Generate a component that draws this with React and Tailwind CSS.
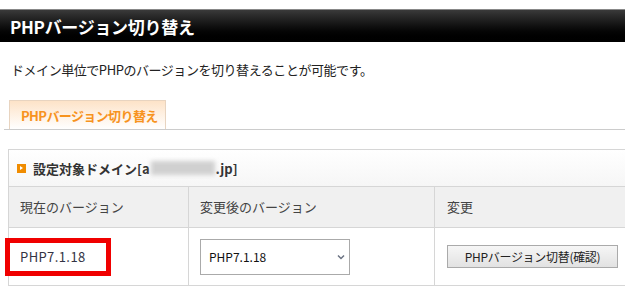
import React from "react";

const jp = { fontFamily: '"Noto Sans CJK JP", "Liberation Sans", sans-serif' };

function Chevron() {
  return (
    <svg width="8" height="6" viewBox="0 0 8 6" className="text-gray-500">
      <path d="M1 1.5 L4 4.5 L7 1.5" fill="none" stroke="currentColor" strokeWidth="1.5" />
    </svg>
  );
}

export default function App() {
  return (
    <div className="w-[625px] h-[297px] overflow-hidden bg-white text-[#333]" style={jp}>
      {/* ===== TITLE BAR ===== */}
      <div className="mt-[9px] h-[33px] border-t border-[#888] bg-gradient-to-b from-[#3a3a3a] via-[#111] to-[#000] flex items-center pl-[10px]">
        <h1 className="text-white font-bold text-[17px] leading-none tracking-[-0.3px]">
          PHPバージョン切り替え
        </h1>
      </div>

      {/* ===== DESCRIPTION ===== */}
      <p className="mt-[19px] pl-[11px] text-[13px] leading-[18px] tracking-[-0.45px] text-[#222]">
        ドメイン単位でPHPのバージョンを切り替えることが可能です。
      </p>

      {/* ===== TAB ===== */}
      <div className="mt-[21px] ml-[4px] border-b border-[#ccc] flex">
        <div className="ml-[5px] -mb-px w-[157px] h-[29px] border border-b-0 border-[#e8d4c0] bg-gradient-to-b from-[#fde3c8] to-white flex items-center pl-[11px]">
          <span className="text-[#f7931e] font-bold text-[13px] leading-none tracking-[-0.6px]">
            PHPバージョン切り替え
          </span>
        </div>
        <div className="h-[29px]" />
      </div>

      {/* ===== SECTION ===== */}
      <div className="mt-[19px] ml-[8px] border border-r-0 border-[#d6d6d6]">
        <div className="h-[36px] bg-gradient-to-b from-white to-[#f6f6f6] flex items-center pl-[8px] gap-[7px]">
          <span className="w-[9px] h-[9px] bg-[#f08c00] flex items-center justify-center">
            <span className="w-0 h-0 border-y-[2.5px] border-y-transparent border-l-[3px] border-l-white" />
          </span>
          <span className="font-bold text-[13px] leading-none text-[#333] flex items-center">
            設定対象ドメイン[a
            <span className="inline-block w-[64px] h-[14px] mx-[1px] bg-[#d0d0d0] blur-[2px]" />
            .jp]
          </span>
        </div>

        <div className="grid grid-cols-[180px_246px_1fr] border-t border-[#d6d6d6]">
          <div className="h-[40px] bg-[#f0f0f0] flex items-center pl-[11px] text-[13px] text-[#444] border-r border-[#d6d6d6]">
            現在のバージョン
          </div>
          <div className="h-[40px] bg-[#f0f0f0] flex items-center pl-[11px] text-[13px] text-[#444] border-r border-[#d6d6d6]">
            変更後のバージョン
          </div>
          <div className="h-[40px] bg-[#f0f0f0] flex items-center pl-[12px] text-[13px] text-[#444]">
            変更
          </div>

          <div className="h-[58px] border-t border-r border-[#d6d6d6] flex items-center">
            <div className="-ml-[4px] w-[106px] h-[38px] border-[5px] border-[#f00000] flex items-center pl-[10px] text-[13px] text-[#334] tracking-[0.4px]">
              PHP7.1.18
            </div>
          </div>
          <div className="h-[58px] border-t border-r border-[#d6d6d6] flex items-center pl-[11px]">
            <div className="w-[150px] h-[36px] border border-[#aaa] bg-white flex items-center justify-between pl-[8px] pr-[4px] text-[12px] text-[#111]">
              <span>PHP7.1.18</span>
              <Chevron />
            </div>
          </div>
          <div className="h-[58px] border-t border-[#d6d6d6] flex items-center pl-[12px]">
            <button className="w-[171px] h-[23px] border border-[#aaa] bg-gradient-to-b from-[#f6f6f6] to-[#e2e2e2] text-[12px] text-[#222] leading-none tracking-[-0.3px]">
              PHPバージョン切替(確認)
            </button>
          </div>
        </div>
      </div>
    </div>
  );
}
